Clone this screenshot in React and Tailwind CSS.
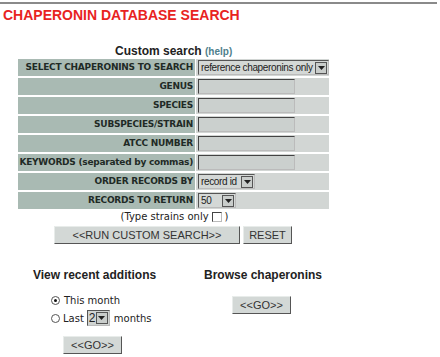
import React from "react";

const rows = [
  { label: "GENUS" },
  { label: "SPECIES" },
  { label: "SUBSPECIES/STRAIN" },
  { label: "ATCC NUMBER" },
  { label: "KEYWORDS (separated by commas)" },
];

function Arrow() {
  return (
    <span className="ml-auto flex h-[12px] w-[12px] shrink-0 items-center justify-center border border-[#555] bg-[#c9cdcb]">
      <svg width="7" height="4" viewBox="0 0 7 4">
        <path d="M0 0h7L3.5 4z" fill="#222" />
      </svg>
    </span>
  );
}

function Select({ value, width }) {
  return (
    <div
      className={`flex h-[15px] items-center whitespace-nowrap border border-[#555] border-r-[#bbb] border-b-[#bbb] bg-[#d4d8d6] pl-[2px] pr-[1px] text-[10px] tracking-[-0.35px] leading-none text-[#222] ${width}`}
      style={{ fontFamily: '"Liberation Sans", Arial, sans-serif' }}
    >
      <span>{value}</span>
      <Arrow />
    </div>
  );
}

function Button({ children, className }) {
  return (
    <button
      className={`block h-[18px] border border-[#e8ecea] border-r-[#555] border-b-[#555] bg-[#d3d8d6] text-[11px] leading-none text-[#333] ${className}`}
      style={{ fontFamily: '"Liberation Sans", Arial, sans-serif' }}
    >
      {children}
    </button>
  );
}

function Label({ children }) {
  return (
    <div
      className="flex h-[17px] items-center justify-end whitespace-nowrap bg-[#a9bab3] pr-[2px] text-[9px] font-bold tracking-[-0.25px] text-[#1f2a26]"
      style={{ fontFamily: '"DejaVu Sans", Verdana, sans-serif' }}
    >
      {children}
    </div>
  );
}

export default function App() {
  const verdana = { fontFamily: '"DejaVu Sans", Verdana, sans-serif' };
  const arial = { fontFamily: '"Liberation Sans", Arial, sans-serif' };
  return (
    <div className="h-[357px] w-[440px] overflow-hidden bg-white">
      <div className="mt-[2px] h-[2px] w-[437px] bg-[#8a8a8a]" />
      <h1 className="ml-[3px] mt-[4px] text-[14px] font-bold leading-[14px] text-[#e8231f]" style={arial}>
        CHAPERONIN DATABASE SEARCH
      </h1>

      <div className="mt-[23px] ml-[115px] text-[12px] font-bold leading-[13px] text-[#222]" style={arial}>
        Custom search <span className="text-[10px] text-[#4f7f8c]">(help)</span>
      </div>

      <div className="ml-[18px] mt-[1px] grid w-[311px] grid-cols-[177px_133px] gap-x-[1px] gap-y-[2px]">
        <Label>SELECT CHAPERONINS TO SEARCH</Label>
        <div className="flex h-[17px] items-center bg-[#d2d6d4] pl-[2px]">
          <Select value="reference chaperonins only" width="w-[131px]" />
        </div>
        {rows.map((r) => (
          <React.Fragment key={r.label}>
            <Label>{r.label}</Label>
            <div className="flex h-[17px] items-center bg-[#d2d6d4] pl-[2px]">
              <div className="h-[15px] w-[97px] border border-[#444] border-r-[#bbb] border-b-[#bbb] bg-[#cbd0ce]" />
            </div>
          </React.Fragment>
        ))}
        <Label>ORDER RECORDS BY</Label>
        <div className="flex h-[17px] items-center bg-[#d2d6d4] pl-[2px]">
          <Select value="record id" width="w-[57px]" />
        </div>
        <Label>RECORDS TO RETURN</Label>
        <div className="flex h-[17px] items-center bg-[#d2d6d4] pl-[2px]">
          <Select value="50" width="w-[38px]" />
        </div>
      </div>

      <div className="mt-[2px] flex w-[329px] items-center justify-center gap-[3px] pl-[20px] text-[10px] leading-[12px] text-[#222]" style={verdana}>
        <span>(Type strains only</span>
        <span className="inline-block h-[10px] w-[10px] border border-[#444] border-r-[#bbb] border-b-[#bbb] bg-white" />
        <span>)</span>
      </div>

      <div className="ml-[54px] mt-[3px] flex gap-[3px]">
        <Button className="w-[186px]">&lt;&lt;RUN CUSTOM SEARCH&gt;&gt;</Button>
        <Button className="w-[49px]">RESET</Button>
      </div>

      <div className="mt-[24px] flex">
        <div className="ml-[33px] w-[171px]">
          <div className="text-[12px] font-bold leading-[14px] text-[#222]" style={arial}>
            View recent additions
          </div>
          <div className="ml-[18px] mt-[11px] text-[10px] text-[#222]" style={verdana}>
            <div className="flex h-[14px] items-center gap-[4px]">
              <span className="flex h-[9px] w-[9px] items-center justify-center rounded-full border border-[#555] bg-white">
                <span className="h-[3px] w-[3px] rounded-full bg-[#111]" />
              </span>
              <span>This month</span>
            </div>
            <div className="mt-[3px] flex h-[16px] items-center gap-[3px]">
              <span className="h-[9px] w-[9px] rounded-full border border-[#555] bg-white" />
              <span>Last</span>
              <div className="flex h-[16px] w-[23px] items-center border border-[#555] border-r-[#bbb] border-b-[#bbb] bg-[#cfd3d1] pl-[1px] pr-[1px] text-[12px]" style={arial}>
                <span>2</span>
                <Arrow />
              </div>
              <span className="ml-[1px]">months</span>
            </div>
          </div>
          <Button className="ml-[30px] mt-[10px] w-[59px]">&lt;&lt;GO&gt;&gt;</Button>
        </div>
        <div>
          <div className="text-[12px] font-bold leading-[14px] text-[#222]" style={arial}>
            Browse chaperonins
          </div>
          <Button className="ml-[28px] mt-[14px] w-[59px]">&lt;&lt;GO&gt;&gt;</Button>
        </div>
      </div>
    </div>
  );
}
